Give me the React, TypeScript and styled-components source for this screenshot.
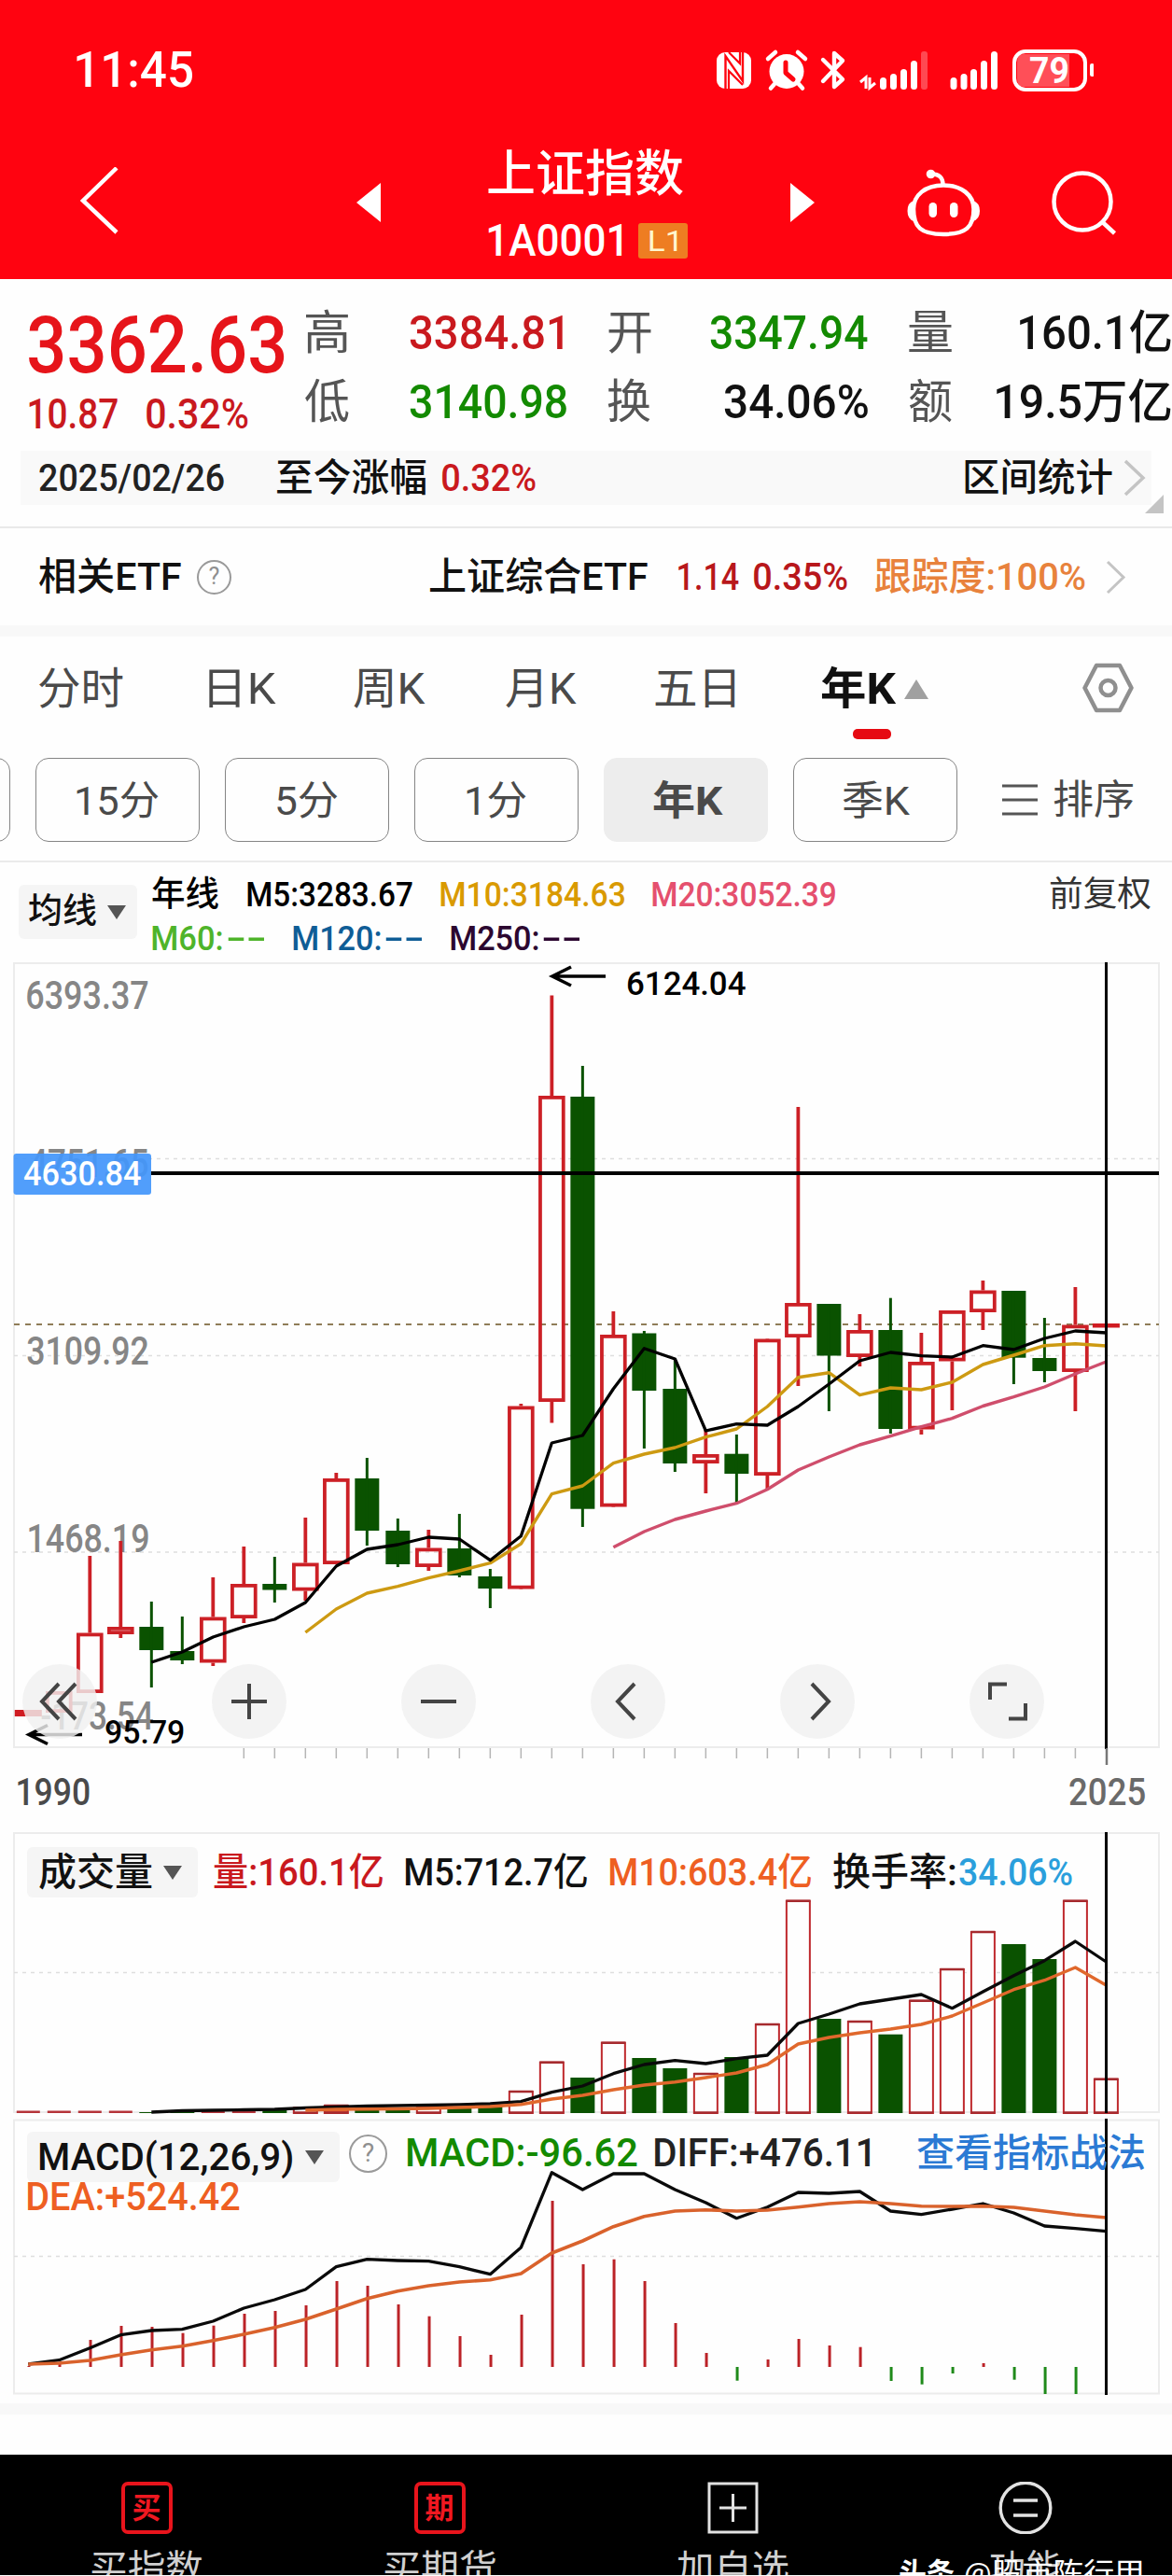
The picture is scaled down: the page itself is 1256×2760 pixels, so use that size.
import React from "react";
import styled, { createGlobalStyle, css } from "styled-components";

const FONT = '"Roboto", "Noto Sans CJK SC", sans-serif';
const RED = "#c9191e";
const GREEN = "#138a00";
const ORANGE = "#ee5f22";

const Global = createGlobalStyle`
  html, body { margin: 0; padding: 0; background: #fff; }
  body { font-family: ${FONT}; overflow: hidden; }
  * { box-sizing: border-box; }
  svg { display: block; flex: none; }
`;

/* ---------- text set to a given visible width ---------- */

const canvas = document.createElement("canvas");

function measureInk(text: string, size: number, weight: number) {
  const ctx = canvas.getContext("2d")!;
  ctx.font = `${weight} ${size}px ${FONT}`;
  const m = ctx.measureText(text);
  return {
    left: m.actualBoundingBoxLeft,
    width: m.actualBoundingBoxLeft + m.actualBoundingBoxRight,
  };
}

const FitBox = styled.span<{ $w: number; $size: number; $gap: number; $color?: string; $weight: number }>`
  display: block;
  flex: none;
  width: ${(p) => p.$w}px;
  height: ${(p) => Math.round(p.$size * 1.2)}px;
  line-height: ${(p) => Math.round(p.$size * 1.2)}px;
  margin-left: ${(p) => p.$gap}px;
  font-size: ${(p) => p.$size}px;
  font-weight: ${(p) => p.$weight};
  color: ${(p) => p.$color || "inherit"};
  white-space: nowrap;
`;

const FitInner = styled.span`
  display: inline-block;
  transform-origin: 0 50%;
`;

type FitProps = { t: string; w: number; size: number; gap?: number; color?: string; weight?: number };

function Fit({ t, w, size, gap = 0, color, weight = 500 }: FitProps) {
  const ink = measureInk(t, size, weight);
  const s = w / ink.width;
  return (
    <FitBox $w={w} $size={size} $gap={gap} $color={color} $weight={weight}>
      <FitInner style={{ transform: `scaleX(${s}) translateX(${ink.left}px)` }}>{t}</FitInner>
    </FitBox>
  );
}

type LabelProps = { t: string; x: number; y: number; w: number; size: number; color: string; weight?: number };

function ChartLabel({ t, x, y, w, size, color, weight = 500 }: LabelProps) {
  const ink = measureInk(t, size, weight);
  return (
    <text
      transform={`translate(${x} ${y}) scale(${w / ink.width} 1) translate(${ink.left} 0)`}
      fontFamily={FONT}
      fontSize={size}
      fontWeight={weight}
      fill={color}
    >
      {t}
    </text>
  );
}

/* ---------- layout parts ---------- */

const Page = styled.div`
  width: 1256px;
  height: 2760px;
  overflow: hidden;
  background: #fefefe;
  display: flex;
  flex-direction: column;
`;

const Header = styled.header`
  background: #ff0310;
  color: #fff;
  height: 299px;
  flex: none;
`;

const StatusBar = styled.div`
  height: 150px;
  display: flex;
  align-items: center;
  padding: 0 84px 0 82px;
`;

const StatusIcons = styled.div`
  margin-left: auto;
`;

const NavBar = styled.nav`
  height: 149px;
  padding: 0 0 16px 82px;
  display: flex;
  align-items: center;
`;

const NavIcon = styled.span<{ $gap: number }>`
  margin-left: ${(p) => p.$gap}px;
  flex: none;
`;

const TitleBlock = styled.div`
  width: 214px;
  margin-left: 115px;
  padding-top: 4px;
  display: flex;
  flex-direction: column;
  gap: 14px;
`;

const CodeLine = styled.div`
  display: flex;
  align-items: center;
  height: 50px;
`;

const LevelBadge = styled.span`
  width: 53px;
  height: 38px;
  margin-left: 18px;
  border-radius: 3px;
  background: #ee7d22;
  color: #fff6cf;
  display: flex;
  align-items: center;
  justify-content: center;
`;

const Quote = styled.section`
  height: 184px;
  display: flex;
  flex: none;
`;

const QuoteMain = styled.div`
  width: 296px;
  flex: none;
  padding: 19px 0 0 31px;
  display: flex;
  flex-direction: column;
`;

const QuoteChange = styled.div`
  display: flex;
  height: 46px;
  align-items: center;
`;

const QuoteGrid = styled.div`
  display: grid;
  grid-template-rows: 74px 74px;
  padding: 21px 0 0 31px;
`;

const Row = styled.div`
  display: flex;
  align-items: center;
`;

const RangeBar = styled.section`
  height: 58px;
  margin: 0 22px;
  padding-left: 20px;
  background: #f9f9f9;
  display: flex;
  align-items: center;
  flex: none;
`;

const FoldLine = styled.div`
  height: 25px;
  flex: none;
  border-bottom: 2px solid #e9e9e9;
  display: flex;
  justify-content: flex-end;
  padding-right: 9px;
`;

const FoldCorner = styled.svg`
  margin-top: -11px;
`;

const EtfRow = styled.section`
  height: 104px;
  padding-left: 42px;
  display: flex;
  align-items: center;
  flex: none;
`;

const Help = styled.span<{ $size: number; $gap: number }>`
  width: ${(p) => p.$size}px;
  height: ${(p) => p.$size}px;
  margin-left: ${(p) => p.$gap}px;
  border: 2px solid #9a9a9a;
  border-radius: 50%;
  color: #8f8f8f;
  font-size: ${(p) => p.$size * 0.68}px;
  line-height: 1;
  display: flex;
  align-items: center;
  justify-content: center;
  flex: none;
`;

const Band = styled.div`
  height: 12px;
  background: #f8f8f8;
  flex: none;
`;

const Tabs = styled.nav`
  height: 130px;
  padding: 28px 0 0 42px;
  display: flex;
  align-items: flex-start;
  color: #4a4a4a;
  flex: none;
`;

const ActiveTab = styled.div`
  margin-left: 92px;
  width: 116px;
  display: flex;
  flex-direction: column;
  color: #111;
`;

const ActiveMark = styled.span`
  width: 41px;
  height: 11px;
  margin: 15px 0 0 34px;
  border-radius: 5px;
  background: #e60a12;
`;

const Pills = styled.div`
  height: 90px;
  display: flex;
  align-items: center;
  gap: 27px;
  margin-left: -165px;
  flex: none;
  color: #4a4a4a;
`;

const Pill = styled.button<{ $active?: boolean }>`
  width: 176px;
  height: 90px;
  padding: 2px 0 0;
  font-family: inherit;
  color: inherit;
  background: #fefefe;
  border: 1.5px solid #858585;
  border-radius: 14px;
  display: flex;
  align-items: center;
  justify-content: center;
  flex: none;
  ${(p) =>
    p.$active &&
    css`
      background: #ededed;
      border-color: #ededed;
    `}
`;

const Sort = styled.div`
  display: flex;
  align-items: center;
  margin-left: 21px;
`;

const MaSection = styled.section`
  height: 109px;
  margin-top: 20px;
  border-top: 2px solid #ebebeb;
  padding-left: 20px;
  display: flex;
  align-items: flex-start;
  flex: none;
`;

const Picker = styled.button<{ $w: number; $h: number; $pad: number; $top?: number }>`
  width: ${(p) => p.$w}px;
  height: ${(p) => p.$h}px;
  margin: ${(p) => p.$top || 0}px 0 0;
  padding: 0 0 0 ${(p) => p.$pad}px;
  border: 0;
  border-radius: 6px;
  background: #f5f5f5;
  color: #111;
  font-family: inherit;
  display: flex;
  align-items: center;
  flex: none;
`;

const MaLines = styled.div`
  display: flex;
  flex-direction: column;
  padding: 11px 0 0 16px;
`;

const MaLine = styled.div`
  height: 47px;
  display: flex;
  align-items: center;
`;

const Panel = styled.section<{ $h: number }>`
  height: ${(p) => p.$h}px;
  flex: none;
  display: grid;
  > * {
    grid-area: 1 / 1;
  }
`;

const ZoomBar = styled.div`
  align-self: end;
  display: flex;
  gap: 123px;
  padding: 0 0 29px 24px;
`;

const ZoomButton = styled.button`
  width: 80px;
  height: 80px;
  padding: 0;
  border: 0;
  border-radius: 50%;
  background: rgba(240, 240, 240, 0.82);
  display: flex;
  align-items: center;
  justify-content: center;
`;

const AxisRow = styled.div`
  height: 71px;
  padding: 0 29px 14px 19px;
  display: flex;
  align-items: center;
  justify-content: space-between;
  flex: none;
`;

const VolHead = styled.div`
  display: flex;
  align-items: center;
  height: 54px;
  margin: 16px 0 0 29px;
`;

const MacdHead = styled.div`
  padding: 14px 0 0 29px;
`;

const MacdLine = styled.div`
  display: flex;
  align-items: flex-start;
  height: 54px;
`;

const MacdValues = styled.div`
  display: flex;
  align-items: center;
  height: 46px;
`;

const DeaLine = styled.div`
  display: flex;
  margin-top: -9px;
`;

const Footer = styled.footer`
  height: 129px;
  margin-top: 43px;
  background: #000;
  color: #d0d0d0;
  display: grid;
  grid-template-columns: repeat(4, 314px);
  position: relative;
  overflow: hidden;
  flex: none;
`;

const FootItem = styled.div`
  display: flex;
  flex-direction: column;
  align-items: center;
  padding-top: 29px;
`;

const RedBox = styled.span`
  width: 55px;
  height: 56px;
  border: 4px solid #e8141c;
  border-radius: 7px;
  color: #f01820;
  font-size: 31px;
  font-weight: 700;
  line-height: 1;
  display: flex;
  align-items: center;
  justify-content: center;
`;

const FootLabel = styled.div`
  margin-top: 14px;
`;

const Watermark = styled.div`
  position: absolute;
  left: 964px;
  top: 109px;
  color: #fff;
  display: flex;
  align-items: center;
`;

/* ---------- small drawings ---------- */

const Chevron = ({ w, h, color, sw }: { w: number; h: number; color: string; sw: number }) => (
  <svg width={w} height={h} viewBox={`0 0 ${w} ${h}`} fill="none" stroke={color} strokeWidth={sw}>
    <path d={`M2 2 L${w - 3} ${h / 2} L2 ${h - 2}`} />
  </svg>
);

const Caret = () => (
  <svg width="20" height="15" viewBox="0 0 20 15">
    <path d="M0 0H20L10 15Z" fill="#555" />
  </svg>
);

const Space = styled.span<{ $w: number }>`
  width: ${(p) => p.$w}px;
  flex: none;
`;

const StatusDrawings = () => (
  <svg width="406" height="50" viewBox="766 48 406 50">
    <rect x="768" y="54" width="37" height="39" rx="9" fill="#fff" />
    <path d="M777.500 93V58L796 85V54" fill="none" stroke="#ff0310" strokeWidth="2.400" />
    <path d="M781 54L793 66V54M781 93V74L796 89" fill="none" stroke="#ff0310" strokeWidth="2.200" />
    <circle cx="843" cy="74.5" r="18.5" fill="#fff" />
    <path d="M823 61L831 54M863 61L855 54M830 88L826 92.500M856 88L860 92.500" stroke="#fff" strokeWidth="4.500" strokeLinecap="round" />
    <path d="M842 65V76L850 83" fill="none" stroke="#ff0310" strokeWidth="5" strokeLinecap="round" strokeLinejoin="round" />
    <path d="M882 62L903 83L894 91V55L903 63L882 85" fill="none" stroke="#fff" strokeWidth="4.400" strokeLinecap="round" strokeLinejoin="round" />
    <path d="M922 86L928 81V93M932 81V92L938 87" fill="none" stroke="#fff" strokeWidth="3" />
    {[
      [946.5, 81], [957.5, 77], [968.500, 72], [979.500, 63],
      [1022, 81], [1033, 77], [1043.500, 72], [1054.500, 63], [1065.500, 53],
    ].map(([x, y]) => (
      <rect key={x} x={x - 3.500} y={y} width="7" height={94 - y} rx="3.500" fill="#fff" />
    ))}
    <rect x="987" y="53" width="7" height="41" rx="3" fill="#fff" opacity=".28" />
    <rect x="1087" y="53" width="76" height="41" rx="12" fill="none" stroke="#fff" strokeWidth="4" />
    <path d="M1097 56H1146V91H1097Q1090 91 1090 82V65Q1090 56 1097 56Z" fill="#fff" opacity=".3" />
    <rect x="1168" y="66" width="4.500" height="14" rx="2.200" fill="#fff" />
    <ChartLabel t="79" x={1104} y={87} w={40} size={38} color="#fff" weight={700} />
  </svg>
);

const Robot = () => (
  <svg width="80" height="76" viewBox="970.500 178 80 76">
    <circle cx="997" cy="185.500" r="4.800" fill="#fff" />
    <g fill="none" stroke="#fff" strokeWidth="4.500">
      <path d="M997 185.500Q1010 185 1010 197" />
      <path d="M1010.500 197.500C1030 197.500 1043 208 1043 223C1043 242 1035 250 1010.500 250C986 250 978.500 242 978.500 223C978.500 208 991 197.500 1010.500 197.500Z" />
    </g>
    <path d="M979 214Q972 216 972 225Q972 234 979 236ZM1042 214Q1049.500 216 1049.500 225Q1049.500 234 1042 236Z" fill="#fff" />
    <rect x="995" y="216" width="8.500" height="16" rx="4.200" fill="#fff" />
    <rect x="1017.500" y="216" width="8.500" height="16" rx="4.200" fill="#fff" />
  </svg>
);

/* ---------- chart data, in chart pixels: [up, high, top, bottom, low] ---------- */

const cx = (i: number) => 30.3 + i * 33.003;

const candles: [number, number, number, number, number][] = [
  [1, 1833, 1833, 1840, 1839], [1, 1813, 1813, 1836, 1836], [1, 1668, 1750.5, 1815, 1815],
  [1, 1652, 1744, 1752, 1756], [0, 1717, 1744, 1769, 1809], [0, 1733, 1770, 1780, 1784],
  [1, 1691, 1733.5, 1782.5, 1786], [1, 1658, 1698, 1735, 1740], [0, 1669, 1698, 1704.5, 1718],
  [1, 1627, 1675.5, 1705.5, 1716], [1, 1579, 1585, 1677, 1677], [0, 1563, 1585, 1641, 1657],
  [0, 1628, 1641, 1677, 1680], [1, 1640, 1659.5, 1680, 1684], [0, 1623, 1660, 1689, 1691],
  [0, 1682, 1690, 1703, 1724], [1, 1505, 1507.5, 1703.5, 1703], [1, 1067.5, 1175, 1503, 1525.5],
  [0, 1143, 1176, 1617.7, 1637], [1, 1406, 1431, 1615.5, 1615], [0, 1427, 1429.5, 1491, 1553],
  [0, 1458, 1489, 1569, 1578], [1, 1533, 1559, 1569, 1601], [0, 1538, 1558.7, 1580, 1612],
  [1, 1436, 1435.5, 1582, 1596], [1, 1187, 1397, 1434, 1486], [0, 1398, 1398, 1453.500, 1513],
  [1, 1409, 1426, 1455, 1465], [0, 1391.7, 1426, 1532, 1537], [1, 1429, 1460, 1532.500, 1538],
  [1, 1405, 1405, 1459.500, 1512], [1, 1373, 1383.500, 1407, 1426], [0, 1384, 1384, 1455.7, 1484],
  [0, 1413, 1456, 1470, 1482], [1, 1380, 1420.500, 1471, 1513], [1, 1419, 1419, 1423.500, 1423],
];

const ma5 = [1782, 1771, 1755, 1744, 1736, 1718, 1679, 1661, 1656, 1648, 1650, 1672.7, 1646.7, 1547, 1539, 1489, 1445.7, 1457, 1534, 1526.7, 1528, 1508, 1484, 1459, 1450, 1453.7, 1455, 1442.7, 1447, 1435, 1427, 1429];
const ma10 = [1750, 1725, 1708, 1700.7, 1691.7, 1684, 1675.7, 1655, 1601.7, 1593, 1568.7, 1559, 1552, 1540.7, 1532, 1508, 1476.7, 1471.7, 1495.7, 1488, 1490, 1482, 1463, 1453, 1442.7, 1440.7, 1443];
const ma20 = [1658.7, 1642, 1629, 1620, 1611.7, 1596.7, 1576, 1562, 1549, 1539.7, 1529.7, 1520.7, 1507.500, 1497.7, 1487, 1473, 1460];

const volTop = [2263, 2263, 2263, 2263, 2264, 2263, 2262, 2262, 2260.500, 2258.500, 2256, 2259, 2260, 2258, 2258, 2256.500, 2241, 2209.7, 2227, 2188.7, 2206, 2217, 2222, 2205, 2169, 2036.7, 2164, 2166, 2180.7, 2143.7, 2110, 2070, 2084, 2100, 2036.7, 2227.7];
const vol5 = [2264, 2262.500, 2262, 2261.500, 2261, 2259.500, 2258.500, 2257.500, 2257, 2256.500, 2256, 2255, 2252.7, 2242.7, 2236, 2222.7, 2213, 2208.7, 2212, 2206.7, 2203, 2169, 2159, 2148, 2143, 2138, 2152.7, 2135, 2117.7, 2101.7, 2081, 2103];
const vol10 = [2262, 2261, 2260.700, 2260.500, 2260, 2259, 2258, 2255.7, 2250, 2246, 2240, 2235, 2231.7, 2227, 2222, 2213, 2191, 2184, 2179, 2175, 2170, 2161, 2147, 2132.7, 2122.7, 2109, 2128];

const macd = [2536, 2533, 2508, 2493, 2494, 2500.7, 2492.7, 2480, 2477, 2471, 2445, 2450, 2470, 2482.7, 2504, 2524, 2481, 2359, 2427, 2421.7, 2445, 2490, 2522, 2551.7, 2529, 2507, 2514, 2515.7, 2552, 2555.7, 2544, 2533, 2550.7, 2566, 2566];
const diff = [2534, 2529.7, 2516.7, 2502.7, 2498, 2496.7, 2488, 2474, 2465, 2454, 2429.7, 2421.7, 2423, 2423.7, 2429.7, 2437.7, 2409, 2328.7, 2347, 2330, 2330, 2347, 2361, 2377.7, 2365.7, 2350, 2351, 2349, 2370, 2373.7, 2368, 2362, 2372, 2386, 2388.7, 2391.7];
const dea = [2534, 2533, 2530, 2524, 2518.7, 2514.7, 2508.7, 2502, 2494.7, 2486, 2475, 2463.7, 2455.7, 2450, 2446, 2443.7, 2437, 2415, 2402, 2386.7, 2375.7, 2370, 2368.7, 2370, 2369, 2365.7, 2362, 2360, 2362, 2364.7, 2365, 2364.7, 2366, 2370, 2374, 2377];

const Line = ({ ys, from, color, sw = 3.3 }: { ys: number[]; from: number; color: string; sw?: number }) => (
  <polyline
    points={ys.map((y, k) => `${cx(from + k)},${y}`).join(" ")}
    fill="none"
    stroke={color}
    strokeWidth={sw}
    strokeLinejoin="round"
  />
);

const Grid = ({ y }: { y: number }) => (
  <line x1="15" x2="1242" y1={y} y2={y} stroke="#dedede" strokeWidth="1.500" strokeDasharray="4 5" />
);

function PriceChart() {
  return (
    <svg width="1256" height="861" viewBox="0 1032 1256 861">
      <rect x="15" y="1033" width="1227" height="840" fill="none" stroke="#ececec" strokeWidth="2" />
      <Grid y={1242.500} />
      <Grid y={1453.500} />
      <Grid y={1664} />
      <line x1="15" x2="1242" y1="1420" y2="1420" stroke="#8f7c58" strokeWidth="1.800" strokeDasharray="6 6" />
      <ChartLabel t="6393.37" x={29} y={1082} w={130} size={42} color="#868686" />
      <ChartLabel t="4751.65" x={32} y={1262} w={127} size={42} color="#868686" />
      <ChartLabel t="3109.92" x={29} y={1463} w={130} size={42} color="#868686" />
      <ChartLabel t="1468.19" x={31} y={1664} w={128} size={42} color="#868686" />
      <ChartLabel t="-173.54" x={44} y={1854} w={120} size={42} color="#868686" />
      {candles.map(([up, hi, top, bot, lo], i) => {
        const x = cx(i);
        if (i === 0 || i === 35) return <rect key={i} x={x - 14.500} y={top} width="29" height={bot - top} fill="#d01c22" />;
        return up ? (
          <g key={i} stroke="#cc2026" strokeWidth="3.800" fill="none">
            <path d={`M${x} ${hi}V${top}M${x} ${bot}V${lo}`} />
            <rect x={x - 12.400} y={top + 1.900} width="24.800" height={bot - top - 3.800} />
          </g>
        ) : (
          <g key={i} fill="#0a5200">
            <rect x={x - 13} y={top} width="26" height={bot - top} />
            <rect x={x - 1.500} y={hi} width="3" height={lo - hi} />
          </g>
        );
      })}
      <Line ys={ma20} from={19} color="#cf4e6c" sw={3.400} />
      <Line ys={ma10} from={9} color="#cd9a12" sw={3.400} />
      <Line ys={ma5} from={4} color="#000" />
      <path d="M162 1258H1242" stroke="#000" strokeWidth="4" />
      <path d="M1185.500 1032V1875" stroke="#000" strokeWidth="3" />
      <g fill="none" stroke="#000" strokeWidth="3.600">
        <path d="M649 1047H592M612 1037L592 1047L612 1057" />
        <path d="M88 1859.500H31M51 1849.500L31 1859.500L51 1869.500" />
      </g>
      <ChartLabel t="6124.04" x={673} y={1067} w={126} size={36} color="#000" />
      <ChartLabel t="95.79" x={113} y={1869} w={84} size={36} color="#000" />
      <rect x="14.500" y="1237" width="147.500" height="44" rx="3" fill="#4497fb" fillOpacity=".93" />
      <ChartLabel t="4630.84" x={25} y={1271} w={126} size={36} color="#fff" />
      {Array.from({ length: 28 }, (_, k) => k + 7).map((i) => (
        <path key={i} d={`M${cx(i)} 1874V1885`} stroke="#b5b5b5" strokeWidth="1.500" />
      ))}
      <path d="M1186 1874V1892" stroke="#777" strokeWidth="2.500" />
    </svg>
  );
}

function VolumeChart() {
  return (
    <svg width="1256" height="307" viewBox="0 1964 1256 307">
      <rect x="15" y="1965" width="1227" height="299" fill="none" stroke="#ececec" strokeWidth="2" />
      <Grid y={2114.500} />
      {volTop.map((y, i) => {
        const x = cx(i);
        if (i < 4 || i === 6 || i === 7) return <rect key={i} x={x - 12.500} y={y - 0.500} width="25" height={2265.500 - y} fill="#b5343a" />;
        if (candles[i][0] === 0) return <rect key={i} x={x - 13} y={y} width="26" height={2265 - y} fill="#0a5200" />;
        return (
          <g key={i}>
            <rect x={x - 12.500} y={y + 1} width="25" height={2264 - y} fill={i === 10 ? "#ee5a30" : "#fefefe"} stroke="#bf2a2e" strokeWidth="2" />
            <path d={`M${x - 13} ${y + 1}H${x + 13}M${x - 13} 2264.500H${x + 13}`} stroke="#a52a2e" strokeWidth="2.400" />
          </g>
        );
      })}
      <Line ys={vol5} from={4} color="#0a0a0a" />
      <Line ys={vol10} from={9} color="#e0682c" sw={3.400} />
      <path d="M1185.500 1964V2265" stroke="#000" strokeWidth="3" />
    </svg>
  );
}

function MacdChart() {
  return (
    <svg width="1256" height="305" viewBox="0 2271 1256 305">
      <rect x="15" y="2272.500" width="1227" height="293" fill="none" stroke="#ececec" strokeWidth="2" />
      <Grid y={2418.500} />
      {macd.map((y, i) => (
        <path key={i} d={`M${cx(i) + 0.700} 2537V${y}`} stroke={y > 2537 ? "#1f8a1a" : "#bb2227"} strokeWidth="3" />
      ))}
      <Line ys={diff} from={0} color="#0a0a0a" />
      <Line ys={dea} from={0} color="#d9622c" sw={3.600} />
      <path d="M1185.500 2271V2567" stroke="#000" strokeWidth="3" />
    </svg>
  );
}

const zoomIcons = [
  "M39 21L21 40L39 59M57 21L39 40L57 59",
  "M21 40H59M40 21V59",
  "M21 40H59",
  "M47 21L29 40L47 59",
  "M34 21L52 40L34 59",
  "M22 38V21.500H40M60 42V58.500H42",
];

export default function App() {
  return (
    <Page>
      <Global />
      <Header>
        <StatusBar>
          <Fit t="11:45" w={124} size={53} />
          <StatusIcons>
            <StatusDrawings />
          </StatusIcons>
        </StatusBar>
        <NavBar>
          <NavIcon $gap={0}>
            <svg width="48" height="76" viewBox="82 179 48 76" fill="none" stroke="#fff" strokeWidth="4.500">
              <path d="M125 180L89 215L125 249" />
            </svg>
          </NavIcon>
          <NavIcon $gap={252}>
            <svg width="26" height="42" viewBox="0 0 26 42"><path d="M26 0V42L0 21Z" fill="#fff" /></svg>
          </NavIcon>
          <TitleBlock>
            <Fit t="上证指数" w={209} size={53} />
            <CodeLine>
              <Fit t="1A0001" w={143} size={48} />
              <LevelBadge>
                <Fit t="L1" w={30} size={32} weight={400} />
              </LevelBadge>
            </CodeLine>
          </TitleBlock>
          <NavIcon $gap={110}>
            <svg width="26" height="42" viewBox="0 0 26 42"><path d="M0 0V42L26 21Z" fill="#fff" /></svg>
          </NavIcon>
          <NavIcon $gap={97.5}><Robot /></NavIcon>
          <NavIcon $gap={75}>
            <svg width="72" height="72" viewBox="1125.500 181 72 72" fill="none" stroke="#fff" strokeWidth="4.500">
              <circle cx="1159.500" cy="216" r="30.500" />
              <path d="M1181 238L1194 250" />
            </svg>
          </NavIcon>
        </NavBar>
      </Header>

      <Quote>
        <QuoteMain>
          <Fit t="3362.63" w={274} size={86} color="#e6141a" />
          <QuoteChange>
            <Fit t="10.87" w={95} size={45} color={RED} />
            <Fit t="0.32%" w={109} size={45} gap={31} color={RED} />
          </QuoteChange>
        </QuoteMain>
        <QuoteGrid>
          <Row>
            <Fit t="高" w={46} size={50} color="#555" weight={400} />
            <Fit t="3384.81" w={164} size={50} gap={66} color={RED} />
            <Fit t="开" w={46} size={50} gap={49} color="#555" weight={400} />
            <Fit t="3347.94" w={169} size={50} gap={63} color={GREEN} />
            <Fit t="量" w={46} size={50} gap={44} color="#555" weight={400} />
            <Fit t="160.1亿" w={162} size={50} gap={73} color="#111" />
          </Row>
          <Row>
            <Fit t="低" w={47} size={50} color="#555" weight={400} />
            <Fit t="3140.98" w={168} size={50} gap={65} color={GREEN} />
            <Fit t="换" w={46} size={50} gap={44} color="#555" weight={400} />
            <Fit t="34.06%" w={154} size={50} gap={79} color="#111" />
            <Fit t="额" w={46} size={50} gap={44} color="#555" weight={400} />
            <Fit t="19.5万亿" w={187} size={50} gap={48} color="#111" />
          </Row>
        </QuoteGrid>
      </Quote>

      <RangeBar>
        <Fit t="2025/02/26" w={198} size={41} color="#222" />
        <Fit t="至今涨幅" w={160} size={41} gap={57} color="#111" />
        <Fit t="0.32%" w={100} size={41} gap={17} color={RED} />
        <Fit t="区间统计" w={158} size={41} gap={460} color="#111" />
        <Space $w={12} />
        <Chevron w={24} h={40} color="#c4c4c4" sw={3.5} />
      </RangeBar>
      <FoldLine>
        <FoldCorner width="20" height="20" viewBox="0 0 20 20">
          <path d="M20 0V20H0Z" fill="#c4c4c4" />
        </FoldCorner>
      </FoldLine>

      <EtfRow>
        <Fit t="相关ETF" w={152} size={41} color="#111" />
        <Help $size={37} $gap={17}>?</Help>
        <Fit t="上证综合ETF" w={234} size={41} gap={212} color="#111" />
        <Fit t="1.14" w={65} size={41} gap={33} color="#b8171b" />
        <Fit t="0.35%" w={100} size={41} gap={16} color="#b8171b" />
        <Fit t="跟踪度:100%" w={225} size={41} gap={30} color="#e8823c" />
        <Space $w={22} />
        <Chevron w={22} h={37} color="#c4c4c4" sw={3} />
      </EtfRow>
      <Band />

      <Tabs>
        <Fit t="分时" w={90} size={47} weight={400} />
        <Fit t="日K" w={72} size={47} gap={92} weight={400} />
        <Fit t="周K" w={77} size={47} gap={83} weight={400} />
        <Fit t="月K" w={76} size={47} gap={86} weight={400} />
        <Fit t="五日" w={86} size={47} gap={84} weight={400} />
        <ActiveTab>
          <Row>
            <Fit t="年K" w={81} size={47} weight={700} />
            <Space $w={8} />
            <svg width="26" height="21" viewBox="0 0 26 21"><path d="M13 0L26 21H0Z" fill="#a0a0a0" /></svg>
          </Row>
          <ActiveMark />
        </ActiveTab>
        <Space $w={164} />
        <svg width="55" height="56" viewBox="0 2 55 56" fill="none" stroke="#8f8f8f" strokeWidth="4.500" strokeLinejoin="round">
          <path d="M15 5H40L52.500 29L40 53H15L2.500 29Z" />
          <circle cx="27.500" cy="29" r="8" />
        </svg>
      </Tabs>

      <Pills>
        <Pill />
        <Pill><Fit t="15分" w={88} size={43} weight={400} /></Pill>
        <Pill><Fit t="5分" w={65} size={43} weight={400} /></Pill>
        <Pill><Fit t="1分" w={64} size={43} weight={400} /></Pill>
        <Pill $active><Fit t="年K" w={75} size={43} weight={700} /></Pill>
        <Pill><Fit t="季K" w={72} size={43} weight={400} /></Pill>
        <Sort>
          <svg width="38" height="34" viewBox="0 0 38 34" stroke="#555" strokeWidth="3">
            <path d="M0 2H38M0 17H38M0 32H38" />
          </svg>
          <Fit t="排序" w={85} size={43} gap={17} weight={400} />
        </Sort>
      </Pills>

      <MaSection>
        <Picker $w={127} $h={58} $pad={11} $top={24}>
          <Fit t="均线" w={72} size={37} />
          <Space $w={12} />
          <Caret />
        </Picker>
        <MaLines>
          <MaLine>
            <Fit t="年线" w={71} size={37} color="#000" />
            <Fit t="M5:3283.67" w={177} size={37} gap={31} color="#000" />
            <Fit t="M10:3184.63" w={197} size={37} gap={30} color="#d99a00" />
            <Fit t="M20:3052.39" w={196} size={37} gap={30} color="#e5506e" />
            <Fit t="前复权" w={108} size={37} gap={230} color="#333" weight={400} />
          </MaLine>
          <MaLine>
            <Fit t="M60:" w={75} size={37} color="#4eb42a" />
            <Fit t="--" w={39} size={37} gap={6} color="#4eb42a" />
            <Fit t="M120:" w={94} size={37} gap={31} color="#0f5d96" />
            <Fit t="--" w={39} size={37} gap={5} color="#0f5d96" />
            <Fit t="M250:" w={94} size={37} gap={31} color="#2c0730" />
            <Fit t="--" w={39} size={37} gap={5} color="#2c0730" />
          </MaLine>
        </MaLines>
      </MaSection>

      <Panel $h={861}>
        <PriceChart />
        <ZoomBar>
          {zoomIcons.map((d) => (
            <ZoomButton key={d}>
              <svg width="80" height="80" viewBox="0 0 80 80" fill="none" stroke="#444" strokeWidth="4">
                <path d={d} />
              </svg>
            </ZoomButton>
          ))}
        </ZoomBar>
      </Panel>
      <AxisRow>
        <Fit t="1990" w={77} size={41} color="#4a4a4a" />
        <Fit t="2025" w={81} size={41} color="#6a6a6a" />
      </AxisRow>

      <Panel $h={307}>
        <VolumeChart />
        <VolHead>
          <Picker $w={183} $h={54} $pad={13}>
            <Fit t="成交量" w={121} size={41} />
            <Space $w={12} />
            <Caret />
          </Picker>
          <Fit t="量:160.1亿" w={181} size={41} gap={17} color={RED} />
          <Fit t="M5:712.7亿" w={195} size={41} gap={24} color="#111" />
          <Fit t="M10:603.4亿" w={216} size={41} gap={24} color={ORANGE} />
          <Fit t="换手率:" w={131} size={41} gap={24} color="#111" />
          <Fit t="34.06%" w={121} size={41} gap={4} color="#2a9fdc" />
        </VolHead>
      </Panel>

      <Panel $h={305}>
        <MacdChart />
        <MacdHead>
          <MacdLine>
            <Picker $w={335} $h={54} $pad={13}>
              <Fit t="MACD(12,26,9)" w={271} size={41} />
              <Space $w={14} />
              <Caret />
            </Picker>
            <MacdValues>
              <Help $size={41} $gap={10}>?</Help>
              <Fit t="MACD:-96.62" w={246} size={42} gap={22} color={GREEN} />
              <Fit t="DIFF:+476.11" w={230} size={42} gap={19} color="#222" />
              <Fit t="查看指标战法" w={243} size={41} gap={51} color="#2b7ad4" />
            </MacdValues>
          </MacdLine>
          <DeaLine>
            <Fit t="DEA:+524.42" w={227} size={42} gap={1} color={ORANGE} />
          </DeaLine>
        </MacdHead>
      </Panel>
      <Band />

      <Footer>
        <FootItem>
          <RedBox>买</RedBox>
          <FootLabel><Fit t="买指数" w={119} size={40} weight={400} /></FootLabel>
        </FootItem>
        <FootItem>
          <RedBox>期</RedBox>
          <FootLabel><Fit t="买期货" w={119} size={40} weight={400} /></FootLabel>
        </FootItem>
        <FootItem>
          <svg width="55" height="56" viewBox="0 0 55 56" fill="none" stroke="#e2e2e2" strokeWidth="3">
            <path d="M2 2H53V54H2ZM13 28H42M27.500 13V43" />
          </svg>
          <FootLabel><Fit t="加自选" w={119} size={40} weight={400} /></FootLabel>
        </FootItem>
        <FootItem>
          <svg width="58" height="56" viewBox="0 1 58 56" fill="none" stroke="#e2e2e2" strokeWidth="3.400">
            <circle cx="29" cy="29" r="26.800" />
            <path d="M16 21H42M16 37H42" />
          </svg>
          <FootLabel><Fit t="功能" w={76} size={40} weight={400} /></FootLabel>
        </FootItem>
        <Watermark>
          <Fit t="头条" w={59} size={31} weight={700} />
          <Fit t="@股市陈行甲" w={190} size={31} gap={11} weight={400} />
        </Watermark>
      </Footer>
    </Page>
  );
}
